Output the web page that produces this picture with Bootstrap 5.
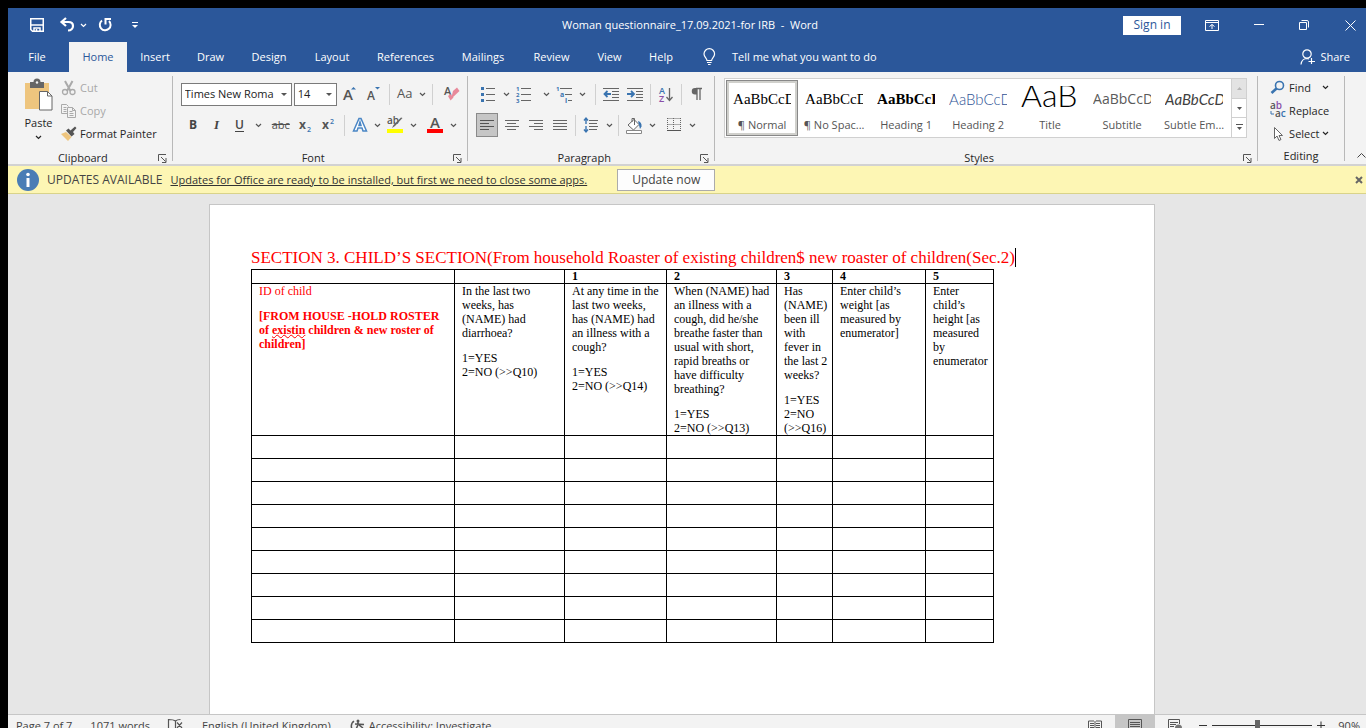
<!DOCTYPE html>
<html lang="en">
<head>
<meta charset="utf-8">
<meta name="viewport" content="width=device-width, initial-scale=1">
<title>Woman questionnaire_17.09.2021-for IRB - Word</title>
<link href="https://cdn.jsdelivr.net/npm/bootstrap@5.3.0/dist/css/bootstrap.min.css" rel="stylesheet">
<style>
:root{--blue:#2b579a;--face:#f3f3f3;--line:#c8c8c8;--ink:#262626;--icon:#666;--accent:#3a74b0}
body{background:#000;height:100vh;overflow:hidden;font:11px/16px "Open Sans","Noto Sans",sans-serif;color:var(--ink)}
button{border:0;background:none;padding:0;color:inherit}
svg{display:block;flex:none;overflow:visible}
.word-app{margin:8px 0 0 8px;height:100vh;background:#e6e6e6}
/* title bar and tabs */
.title-bar{height:34px;display:grid;grid-template-columns:1fr auto 1fr;background:var(--blue);color:#fff}
.doc-title{white-space:pre;padding-left:6px}
.quick{padding-left:20px;gap:10px}
.sign-in{background:#fff;color:var(--blue);width:58px;height:19px}
.sign-in,.update-btn,.notice-head{font-size:12px}
.win-tools{gap:35px;padding-right:10px}
.tab-bar{height:30px;background:var(--blue);color:#fff}
.tab-grid{display:grid;grid-template-columns:58px 61px 56px 55px 62px 64px 83px 72px 65px 51px 52px}
.tab-grid a{color:#fff;text-decoration:none;display:flex;align-items:center;justify-content:center}
.tab-grid a.on{background:var(--face);color:var(--blue);margin-left:3px}
/* ribbon */
.ribbon{background:var(--face);height:94px;padding:4px 0 3px;border-bottom:2px solid #d2d2d2}
.group{border-right:1px solid #b8b8b8;display:flex;flex-direction:column;justify-content:space-between}
.g-clip{width:165px}.g-font{width:296px}.g-para{width:247px}.g-edit{width:87px}
.g-label{display:grid;grid-template-columns:1fr 14px;text-align:center;height:11px;align-items:center}
.tool-rows{padding:6px 0 0 8px;display:flex;flex-direction:column;gap:7px}
.tool-row{display:flex;align-items:center;height:24px}
.tool{width:24px;height:24px;display:flex;align-items:center;justify-content:center;flex:none;color:#505050}
.tool.on{background:#c6c6c6;border:1px solid #8a8a8a;width:22px;margin-right:2px}
.drop{width:12px;height:24px;display:flex;align-items:center;justify-content:center;flex:none;color:#555}
.bar{width:7px;height:21px;flex:none;background:linear-gradient(#d0d0d0,#d0d0d0) center/1px 100% no-repeat}
.combo{appearance:none;height:23px;border:1px solid #7a7a7a;border-radius:0;padding:0 10px 0 3px;color:#222;background:#fff url("data:image/svg+xml,%3Csvg xmlns='http://www.w3.org/2000/svg' width='6' height='3'%3E%3Cpath d='M0 0h6L3 3z' fill='%23555'/%3E%3C/svg%3E") right 4px center no-repeat}
.combo.face{width:111px;margin-right:2px}.combo.pt{width:43px;margin-right:1px}
.small-cmd{display:flex;align-items:center;height:23px;gap:3px;white-space:nowrap}
.dim{color:#a8a8a8}
/* styles gallery */
.gallery{margin:2px 10px 0 9px;height:60px;background:#fff;border:1px solid #d0d0d0;display:flex}
.gallery-items{display:grid;grid-template-columns:repeat(7,72px);padding:1px;flex:1}
.style-item{height:56px;padding:6px 6px 0;overflow:hidden;display:flex;flex-direction:column;align-items:center;color:#555}
.style-item.on{outline:1px solid #888;outline-offset:-1px;box-shadow:inset 0 0 0 3px #d0d0cc}
.preview{width:58px;height:26px;line-height:26px;overflow:hidden;white-space:nowrap;text-align:left;color:#000}
.style-name{height:22px;line-height:26px;white-space:nowrap}
.serif{font-family:"Liberation Serif",serif;font-size:15px}
.light{font-family:Lato,sans-serif;font-weight:300;font-size:15px}
.light.h2-tone{color:#2f5496}
.light.big{font-size:32px;line-height:18px}
.sub{font-size:14px;color:#5a5a5a}
.emph{font-family:Lato,sans-serif;font-style:italic;font-size:15px;color:#404040}
.scroller{width:15px;display:flex;flex-direction:column;border-left:1px solid #d0d0d0}
.scroller button{flex:1;display:flex;align-items:center;justify-content:center;border-bottom:1px solid #d0d0d0}
.scroller button:first-child{background:#e3e3e3}
.scroller button:last-child{border:0}
/* message bar */
.notice{height:28px;background:#fdf6b4;border-bottom:1px solid #d9d38a;color:#444;padding:0 3px 0 9px}
.notice a{color:#333}
.update-btn{background:#fdfdfd;border:1px solid #ababab;width:98px;height:22px;margin-left:30px}
/* document */
.workspace{flex:1;min-height:0;padding:10px 10px 0 0;overflow:hidden}
.sheet{width:946px;background:#fff;border:1px solid #c6c6c6;border-bottom:0;padding:43px 41px 0;font-family:"Liberation Serif",serif;color:#000}
.sheet h1{font-size:17px;line-height:20px;color:#f00;margin:0 0 1px;font-weight:400;white-space:nowrap}
.caret{border-right:1px solid #000}
.form-grid{width:743px;table-layout:fixed;border-collapse:collapse;font-size:12px;line-height:14px}
.form-grid th,.form-grid td{border:1px solid #000;padding:0 4px 0 7px;vertical-align:top;text-align:left}
.form-grid th{line-height:13px;height:14px}
.form-grid p{margin:0 0 11px}
.form-grid p:last-child{margin:0}
.form-grid .blank td{height:23px}
.red{color:#f00}
.typo{text-decoration:underline wavy #f00 1px;text-underline-offset:0}
/* status bar */
.status{height:22px;background:var(--face);border-top:1px solid #c6c6c6;color:#444;padding:0 6px 0 8px;gap:18px}
.view-btn{width:40px;height:21px;display:flex;align-items:center;justify-content:center}
.view-btn.on{background:#c6c6c6}
.zoom-range{appearance:none;background:linear-gradient(#333,#333) center/100% 1px no-repeat;width:100px;height:14px;margin:0 5px}
.zoom-range::-webkit-slider-thumb{appearance:none;width:5px;height:12px;background:#666}
.zoom-value{margin-left:13px}
</style>
</head>
<body>
<svg width="0" height="0" class="position-absolute" aria-hidden="true">
<symbol id="chev" viewBox="0 0 7 5"><path d="M1 1l2.500 2.500L6 1" fill="none" stroke="currentColor" stroke-width="1.200"/></symbol>
<symbol id="launch" viewBox="0 0 9 9"><path d="M.5 7V.5H8M3 3l4.500 4.500M8 4v4.500H4" fill="none" stroke="#555"/></symbol>
</svg>
<div class="word-app d-flex flex-column">
<header>
<div class="title-bar align-items-center">
 <div class="quick d-flex align-items-center">
  <button aria-label="Save"><svg width="18" height="16"><path d="M2.750 1.750h12.500v12.500H4.500L2.750 12.500zM2.750 8h12.500M6 14v-3h6v3M8.500 14v-2" fill="none" stroke="#fff" stroke-width="1.500"/></svg></button>
  <button class="d-flex align-items-center gap-1 ms-1" aria-label="Undo"><svg width="16" height="16"><path d="M6 1L1.500 5 6 9M2 5h6.500c3 0 4.500 1.500 4.500 4s-2 4.500-5 4.500" fill="none" stroke="#fff" stroke-width="2.200"/></svg><svg width="7" height="5"><use href="#chev"/></svg></button>
  <button aria-label="Redo"><svg width="16" height="16"><path d="M5 3.500a5.400 5.400 0 1 0 7 .5M14 2H8.500v5.500" fill="none" stroke="#fff" stroke-width="2"/></svg></button>
  <button class="ms-2" aria-label="Customize"><svg width="8" height="8"><path d="M1 1.500h6" stroke="#fff"/><path d="M1 4h6L4 7z" fill="#fff"/></svg></button>
 </div>
 <div class="doc-title">Woman questionnaire_17.09.2021-for IRB  -  Word</div>
 <div class="d-flex justify-content-end align-items-center">
  <button class="sign-in me-4">Sign in</button>
  <div class="win-tools d-flex align-items-center">
   <button aria-label="Ribbon options"><svg width="14" height="11"><path d="M.5.500h13v10H.5zM.5 2.500h13M7 9V4.500M4.500 6.500L7 4.500l2.500 2" fill="none" stroke="#fff"/></svg></button>
   <button aria-label="Minimize"><svg width="10" height="11"><path d="M0 4.500h10" stroke="#fff"/></svg></button>
   <button aria-label="Restore"><svg width="11" height="11"><path d="M.5 2.500h7v7h-7zM2.500.500H8q1.500 0 1.500 1.500v5.500" fill="none" stroke="#fff"/></svg></button>
   <button aria-label="Close"><svg width="11" height="11"><path d="M.5.500l10 10M10.500.500l-10 10" stroke="#fff"/></svg></button>
  </div>
 </div>
</div>
<div class="tab-bar d-flex">
 <nav class="tab-grid">
  <a href="#">File</a><a href="#" class="on">Home</a><a href="#">Insert</a><a href="#">Draw</a><a href="#">Design</a><a href="#">Layout</a><a href="#">References</a><a href="#">Mailings</a><a href="#">Review</a><a href="#">View</a><a href="#">Help</a>
 </nav>
 <button class="d-flex align-items-center ms-3"><svg width="13" height="18" class="me-3"><path d="M4 12.500c0-2-3-3.500-3-6.500a5.300 5.300 0 0 1 10.600 0c0 3-3 4.500-3 6.500zM4 14.500h4.600M5 16.500h2.600" fill="none" stroke="#fff" stroke-width="1.200"/></svg>Tell me what you want to do</button>
 <button class="d-flex align-items-center ms-auto me-3 gap-1"><svg width="16" height="16"><circle cx="7" cy="5" r="4.200" fill="none" stroke="#fff" stroke-width="1.200"/><path d="M1 15.500c.5-4 2.500-6 6-6l2 .5M11.500 9v6M8.500 12.500h6.500" fill="none" stroke="#fff" stroke-width="1.200"/></svg>Share</button>
</div>
</header>

<div class="ribbon d-flex" role="toolbar" aria-label="Home">
 <section class="group g-clip">
  <div class="d-flex">
   <button class="d-flex flex-column align-items-center ms-3 me-2 pt-1">
    <svg width="29" height="31"><path d="M1 3h24v26H1z" fill="#eec57e"/><path d="M6 2h3.500a3 3 0 0 1 7 0H20v6H6z" fill="#666"/><circle cx="13" cy="2.500" r="1.200" fill="#f3f3f3"/><path d="M15.500 11.500h8l4.500 4.500v14H15.500z" fill="#fff" stroke="#666"/><path d="M23.500 11.500V16H28" fill="none" stroke="#666"/></svg>
    <span class="pt-1">Paste</span><svg width="7" height="5" class="mt-1"><use href="#chev"/></svg></button>
   <div>
    <button class="small-cmd dim" disabled><svg width="16" height="16"><path d="M4 1l5.500 10M11.500 1L6 11" stroke="#aaa" stroke-width="2"/><circle cx="4" cy="12" r="2.500" fill="none" stroke="#aaa" stroke-width="1.300"/><circle cx="11.500" cy="12" r="2.500" fill="none" stroke="#aaa" stroke-width="1.300"/></svg>Cut</button>
    <button class="small-cmd dim" disabled><svg width="16" height="16"><path d="M6 10.500H.5V1.500h5l2 2M2.500 4.500h3M2.500 6.500h3M2.500 8.500h3M6.500 4.500h5l3 3v7h-8zM11.500 4.500v3h3M8.500 8.500h3M8.500 10.500h4M8.500 12.500h4" fill="none" stroke="#aaa"/></svg>Copy</button>
    <button class="small-cmd"><svg width="16" height="16"><path d="M0 8l5-2 5.500 5L7 15z" fill="#eec57e"/><path d="M5 4.500l2.500-2 2 2L14 .500 15.500 2l-3.500 4 1.500 2-3 2.500z" fill="#555"/></svg>Format Painter</button>
   </div>
  </div>
  <div class="g-label"><span>Clipboard</span><button aria-label="Clipboard settings"><svg width="9" height="9"><use href="#launch"/></svg></button></div>
 </section>

 <section class="group g-font">
  <div class="tool-rows">
   <div class="tool-row">
    <select class="combo face" aria-label="Font"><option>Times New Roma</option></select>
    <select class="combo pt" aria-label="Font size"><option>14</option></select>
    <button class="tool" aria-label="Grow font"><svg width="14" height="16"><text x="0" y="14" font-size="15" font-weight="600" fill="#555">A</text><path d="M8 3.500h5L10.500 1z" fill="#3a74b0"/></svg></button>
    <button class="tool" aria-label="Shrink font"><svg width="14" height="16"><text x="0" y="14" font-size="12" font-weight="600" fill="#555">A</text><path d="M8 1h5l-2.500 2.500z" fill="#3a74b0"/></svg></button>
    <span class="bar"></span>
    <button class="tool" aria-label="Change case"><svg width="16" height="16"><text x="0" y="12" font-size="13" fill="#555">Aa</text></svg></button>
    <button class="drop" aria-label="Case options"><svg width="7" height="5"><use href="#chev"/></svg></button>
    <span class="bar"></span>
    <button class="tool ms-1" aria-label="Clear formatting"><svg width="16" height="16"><text x="0" y="9" font-size="11" font-weight="600" fill="#555">A</text><path d="M9 5l4-3.500L15.500 5 7 13z" fill="#e8899a"/><path d="M4 10l2.500-2 3 3.500L6.500 14.500z" fill="#e8899a"/></svg></button>
   </div>
   <div class="tool-row">
    <button class="tool" aria-label="Bold"><svg width="24" height="16"><text x="8" y="12" font-size="12" font-weight="700" fill="#444">B</text></svg></button>
    <button class="tool" aria-label="Italic"><svg width="24" height="16"><text x="9" y="12" font-size="13" font-style="italic" font-weight="700" fill="#444" font-family="Liberation Serif">I</text></svg></button>
    <button class="tool" aria-label="Underline"><svg width="24" height="16"><text x="6" y="12" font-size="12" font-weight="600" fill="#444">U</text><path d="M6 14.500h9" stroke="#444"/></svg></button>
    <button class="drop" aria-label="Underline styles"><svg width="7" height="5"><use href="#chev"/></svg></button>
    <button class="tool text-decoration-line-through ms-1">abc</button>
    <button class="tool" aria-label="Subscript"><svg width="16" height="16"><text x="2" y="12" font-size="12" font-weight="700" fill="#555">x</text><text x="10" y="15" font-size="7" font-weight="600" fill="#3a74b0">2</text></svg></button>
    <button class="tool" aria-label="Superscript"><svg width="16" height="16"><text x="1" y="12" font-size="12" font-weight="700" fill="#555">x</text><text x="9" y="7" font-size="7" font-weight="600" fill="#3a74b0">2</text></svg></button>
    <span class="bar"></span>
    <button class="tool" aria-label="Text effects"><svg width="16" height="16"><path d="M1.500 14L7 1.500h2L14.500 14H11l-1-3H6l-1 3zM7 8.500h2L8 5z" fill="#fff" stroke="#4a86c5" stroke-width="1.500"/></svg></button>
    <button class="drop" aria-label="Effects options"><svg width="7" height="5"><use href="#chev"/></svg></button>
    <button class="tool" aria-label="Highlight"><svg width="17" height="18"><text x="0" y="8" font-size="10" font-weight="600" fill="#555">ab</text><path d="M15.500 2L8 10l-3 2 1.500-3L14 1.500z" fill="#666"/><path d="M0 13h16v4H0z" fill="#ff0"/></svg></button>
    <button class="drop" aria-label="Highlight colour"><svg width="7" height="5"><use href="#chev"/></svg></button>
    <button class="tool ms-1" aria-label="Font colour"><svg width="17" height="18"><text x="3" y="12" font-size="15" font-weight="600" fill="#555">A</text><path d="M0 13h16v4H0z" fill="#f00"/></svg></button>
    <button class="drop" aria-label="Font colour options"><svg width="7" height="5"><use href="#chev"/></svg></button>
   </div>
  </div>
  <div class="g-label"><span>Font</span><button aria-label="Font settings"><svg width="9" height="9"><use href="#launch"/></svg></button></div>
 </section>

 <section class="group g-para">
  <div class="tool-rows">
   <div class="tool-row">
    <button class="tool" aria-label="Bullets"><svg width="15" height="16"><path d="M5 2.500h9M5 8.500h9M5 14.500h9" stroke="#666"/><path d="M0 1h3v3H0zM0 7h3v3H0zM0 13h3v3H0z" fill="#3a74b0"/></svg></button>
    <button class="drop" aria-label="Bullet options"><svg width="7" height="5"><use href="#chev"/></svg></button>
    <button class="tool" aria-label="Numbering"><svg width="16" height="17"><path d="M5 2.500h10M5 8.500h10M5 14.500h10" stroke="#666"/><text y="5" font-size="6" font-weight="700" fill="#3a74b0">1</text><text y="11" font-size="6" font-weight="700" fill="#3a74b0">2</text><text y="17" font-size="6" font-weight="700" fill="#3a74b0">3</text></svg></button>
    <button class="drop ms-1" aria-label="Numbering options"><svg width="7" height="5"><use href="#chev"/></svg></button>
    <button class="tool" aria-label="Multilevel list"><svg width="17" height="17"><path d="M4 2.500h12M9 8.500h7M12 14.500h4" stroke="#666"/><text y="5" font-size="6" font-weight="700" fill="#3a74b0">1</text><text x="4" y="11" font-size="7" font-weight="700" fill="#3a74b0">a</text><text x="9" y="17" font-size="7" font-weight="700" fill="#3a74b0">i</text></svg></button>
    <button class="drop" aria-label="List options"><svg width="7" height="5"><use href="#chev"/></svg></button>
    <span class="bar ms-1"></span>
    <button class="tool" aria-label="Decrease indent"><svg width="17" height="14"><path d="M0 1.500h16M9 4.500h7M9 7.500h7M9 10.500h7M0 13.500h16" stroke="#666"/><path d="M8 7H2M4.500 4L1.500 7l3 3" fill="none" stroke="#3a74b0" stroke-width="1.800"/></svg></button>
    <button class="tool" aria-label="Increase indent"><svg width="17" height="14"><path d="M0 1.500h16M9 4.500h7M9 7.500h7M9 10.500h7M0 13.500h16" stroke="#666"/><path d="M0 7h6M4 4l3 3-3 3" fill="none" stroke="#3a74b0" stroke-width="1.800"/></svg></button>
    <span class="bar"></span>
    <button class="tool" aria-label="Sort"><svg width="15" height="17"><text y="8" font-size="9" font-weight="600" fill="#3a74b0">A</text><text y="16" font-size="9" font-weight="600" fill="#8a4fa8">Z</text><path d="M10.500 2v12M7.500 11l3 3.500 3-3.500" fill="none" stroke="#666" stroke-width="1.300"/></svg></button>
    <span class="bar"></span>
    <button class="tool" aria-label="Show marks"><svg width="12" height="14"><path d="M5 1.500h6M6 1.500V13M9 1.500V13" stroke="#666" stroke-width="1.300"/><path d="M6 1H4a3.200 3.200 0 0 0 0 6.500h2z" fill="#666"/></svg></button>
   </div>
   <div class="tool-row">
    <button class="tool on" aria-label="Align left"><svg width="16" height="13"><path d="M1 1.500h14M1 4.500h9M1 7.500h14M1 10.500h9" stroke="#555"/></svg></button>
    <button class="tool" aria-label="Centre"><svg width="16" height="13"><path d="M1 1.500h14M3 4.500h9M1 7.500h14M3 10.500h9" stroke="#666"/></svg></button>
    <button class="tool" aria-label="Align right"><svg width="16" height="13"><path d="M1 1.500h14M6 4.500h9M1 7.500h14M6 10.500h9" stroke="#666"/></svg></button>
    <button class="tool" aria-label="Justify"><svg width="16" height="13"><path d="M1 1.500h14M1 4.500h14M1 7.500h14M1 10.500h14" stroke="#666"/></svg></button>
    <span class="bar"></span>
    <button class="tool" aria-label="Line spacing"><svg width="16" height="16"><path d="M6 3.500h9M6 6.500h8M6 9.500h9M6 12.500h8" stroke="#666"/><path d="M3 1v6M1 3.500l2-2.500 2 2.500M3 9v6M1 12.500L3 15l2-2.500" fill="none" stroke="#3a74b0" stroke-width="1.400"/></svg></button>
    <button class="drop" aria-label="Spacing options"><svg width="7" height="5"><use href="#chev"/></svg></button>
    <span class="bar"></span>
    <button class="tool" aria-label="Shading"><svg width="17" height="17"><path d="M2 8l6-5.500 5 5-5.500 5.500zM6 5V1.500h2.500V8" fill="#fff" stroke="#666"/><path d="M12 4q4 1 3.500 5.500L14 12z" fill="#3a74b0"/><path d="M.5 13.500h15v3H.5z" fill="#fff" stroke="#888"/></svg></button>
    <button class="drop" aria-label="Shading options"><svg width="7" height="5"><use href="#chev"/></svg></button>
    <button class="tool ms-1" aria-label="Borders"><svg width="14" height="14"><path d="M.5.500h13M.5 6.500h13M.5 0v12M6.500 0v12M13.500 0v12" stroke="#666" stroke-dasharray="1 1"/><path d="M0 12.500h14" stroke="#555"/></svg></button>
    <button class="drop" aria-label="Border options"><svg width="7" height="5"><use href="#chev"/></svg></button>
   </div>
  </div>
  <div class="g-label"><span>Paragraph</span><button aria-label="Paragraph settings"><svg width="9" height="9"><use href="#launch"/></svg></button></div>
 </section>

 <section class="group flex-grow-1">
  <div class="gallery">
   <div class="gallery-items">
    <button class="style-item on"><span class="preview serif">AaBbCcDd</span><span class="style-name">¶ Normal</span></button>
    <button class="style-item"><span class="preview serif">AaBbCcDd</span><span class="style-name">¶ No Spac...</span></button>
    <button class="style-item"><span class="preview serif fw-bold">AaBbCcDd</span><span class="style-name">Heading 1</span></button>
    <button class="style-item"><span class="preview light h2-tone">AaBbCcDd</span><span class="style-name">Heading 2</span></button>
    <button class="style-item"><span class="preview light big">AaB</span><span class="style-name">Title</span></button>
    <button class="style-item"><span class="preview sub">AaBbCcDd</span><span class="style-name">Subtitle</span></button>
    <button class="style-item"><span class="preview emph">AaBbCcDd</span><span class="style-name">Subtle Em...</span></button>
   </div>
   <div class="scroller">
    <button aria-label="Up"><svg width="5" height="3"><path d="M0 3h5L2.500 0z" fill="#b5b5b5"/></svg></button>
    <button aria-label="Down"><svg width="5" height="3"><path d="M0 0h5L2.500 3z" fill="#555"/></svg></button>
    <button aria-label="More styles"><svg width="7" height="7"><path d="M0 .500h7" stroke="#555"/><path d="M1 3h5L3.500 6z" fill="#555"/></svg></button>
   </div>
  </div>
  <div class="g-label"><span>Styles</span><button aria-label="Styles settings"><svg width="9" height="9"><use href="#launch"/></svg></button></div>
 </section>

 <section class="group g-edit">
  <div class="ps-2 ms-1">
   <button class="small-cmd"><svg width="16" height="16"><circle cx="9.500" cy="5.500" r="4" fill="none" stroke="#3a74b0" stroke-width="1.600"/><path d="M6.500 8.500L1.500 13" stroke="#3a74b0" stroke-width="2.600"/></svg>Find<svg width="7" height="5" class="ms-2"><use href="#chev"/></svg></button>
   <button class="small-cmd"><svg width="16" height="17"><text x="0" y="7" font-size="10" font-weight="600" fill="#555">a<tspan fill="#8a4fa8">b</tspan></text><text x="5" y="15" font-size="10" font-weight="600" fill="#555">a<tspan fill="#3a74b0">c</tspan></text><path d="M1 9v3h3" fill="none" stroke="#3a74b0"/></svg>Replace</button>
   <button class="small-cmd"><svg width="16" height="16"><path d="M4.500 1.500v11l2.500-2.500 2 4.500 2-1-2-4h3.500z" fill="#fff" stroke="#666"/></svg>Select<svg width="7" height="5"><use href="#chev"/></svg></button>
  </div>
  <div class="g-label d-block"><span class="d-block lh-1">Editing</span></div>
 </section>
 <button class="align-self-end ps-2 ms-1" aria-label="Collapse ribbon"><svg width="9" height="9"><path d="M.5 5.500l4-4 4 4" fill="none" stroke="#444"/></svg></button>
</div>

<div class="notice d-flex align-items-center">
 <svg width="22" height="22" class="me-2"><circle cx="11" cy="11" r="11" fill="#4a7db5"/><path d="M9.500 9h3v9h-3z" fill="#fff"/><circle cx="11" cy="5.500" r="1.800" fill="#fff"/></svg>
 <span class="notice-head">UPDATES AVAILABLE</span>
 <a href="#" class="ms-2">Updates for Office are ready to be installed, but first we need to close some apps.</a>
 <button class="update-btn">Update now</button>
 <button class="ms-auto" aria-label="Dismiss"><svg width="8" height="8"><path d="M1 1l6 6M7 1L1 7" stroke="#666" stroke-width="2"/></svg></button>
</div>

<main class="workspace d-flex justify-content-center">
 <article class="sheet">
  <h1><span class="caret">SECTION 3. CHILD’S SECTION(From household Roaster of existing children$ new roaster of children(Sec.2)</span></h1>
  <table class="form-grid">
   <colgroup><col style="width:203px"><col style="width:110px"><col style="width:102px"><col style="width:110px"><col style="width:56px"><col style="width:93px"><col style="width:68px"></colgroup>
   <thead><tr><th></th><th></th><th>1</th><th>2</th><th>3</th><th>4</th><th>5</th></tr></thead>
   <tbody>
    <tr>
     <td class="red"><p>ID of child</p><p class="fw-bold">[FROM HOUSE -HOLD ROSTER of <span class="typo">existin</span> children &amp; new roster of children]</p></td>
     <td><p>In the last two weeks, has (NAME) had diarrhoea?</p><p>1=YES<br>2=NO (&gt;&gt;Q10)</p></td>
     <td><p>At any time in the last two weeks, has (NAME) had an illness with a cough?</p><p>1=YES<br>2=NO (&gt;&gt;Q14)</p></td>
     <td><p>When (NAME) had an illness with a cough, did he/she breathe faster than usual with short, rapid breaths or have difficulty breathing?</p><p>1=YES<br>2=NO (&gt;&gt;Q13)</p></td>
     <td><p>Has (NAME) been ill with fever in the last 2 weeks?</p><p>1=YES<br>2=NO (&gt;&gt;Q16)</p></td>
     <td><p>Enter child’s weight [as measured by enumerator]</p></td>
     <td><p>Enter child’s height [as measured by enumerator</p></td>
    </tr>
    <tr class="blank"><td></td><td></td><td></td><td></td><td></td><td></td><td></td></tr>
    <tr class="blank"><td></td><td></td><td></td><td></td><td></td><td></td><td></td></tr>
    <tr class="blank"><td></td><td></td><td></td><td></td><td></td><td></td><td></td></tr>
    <tr class="blank"><td></td><td></td><td></td><td></td><td></td><td></td><td></td></tr>
    <tr class="blank"><td></td><td></td><td></td><td></td><td></td><td></td><td></td></tr>
    <tr class="blank"><td></td><td></td><td></td><td></td><td></td><td></td><td></td></tr>
    <tr class="blank"><td></td><td></td><td></td><td></td><td></td><td></td><td></td></tr>
    <tr class="blank"><td></td><td></td><td></td><td></td><td></td><td></td><td></td></tr>
    <tr class="blank"><td></td><td></td><td></td><td></td><td></td><td></td><td></td></tr>
   </tbody>
  </table>
 </article>
</main>

<footer class="status d-flex align-items-center">
 <span>Page 7 of 7</span><span>1071 words</span>
 <svg width="16" height="16"><path d="M7.500 14V3q-2-1.500-7-1.500v11h5M7.500 3q1.500-1.500 5-1.500M9 4.500l5 5.500M14 4.500L9 10" fill="none" stroke="#555" stroke-width="1.200"/></svg>
 <span>English (United Kingdom)</span>
 <button class="d-flex align-items-center gap-1"><svg width="16" height="16"><path d="M5 3A6 6 0 0 0 5 13M6 6l9 .500M9 2v4.500l-2 5M10 7l4 3" fill="none" stroke="#555" stroke-width="1.500"/><circle cx="9" cy="3" r="1.500" fill="#555"/></svg>Accessibility: Investigate</button>
 <div class="ms-auto d-flex align-items-center">
  <button class="view-btn" aria-label="Read mode"><svg width="14" height="12"><path d="M.5 1v10.500h13V1M7 1v11M.5 1H6M8 1h5.500M2 3.500h4M2 5.500h4M2 7.500h4M2 9.500h4M8 3.500h4M8 5.500h4M8 7.500h4M8 9.500h4" fill="none" stroke="#555"/></svg></button>
  <button class="view-btn on" aria-label="Print layout"><svg width="14" height="13"><path d="M.5.500h13v12H.5zM2 3.500h10M2 5.500h10M2 7.500h10M2 9.500h10" fill="none" stroke="#555"/></svg></button>
  <button class="view-btn" aria-label="Web layout"><svg width="15" height="13"><path d="M6 12.500H.5V.500h11V5M2 3.500h8M2 5.500h6M2 7.500h4M2 9.500h4" fill="none" stroke="#555"/><circle cx="10.500" cy="9" r="3.500" fill="#777"/></svg></button>
  <button aria-label="Zoom out" class="ms-1"><svg width="8" height="9"><path d="M0 4.500h8" stroke="#333"/></svg></button>
  <input type="range" class="zoom-range" aria-label="Zoom" min="0" max="100" value="45">
  <button aria-label="Zoom in"><svg width="8" height="9"><path d="M0 4.500h8M4 .500v8" stroke="#333"/></svg></button>
  <span class="zoom-value">90%</span>
 </div>
</footer>
</div>
<script src="https://cdn.jsdelivr.net/npm/bootstrap@5.3.0/dist/js/bootstrap.bundle.min.js"></script>
</body>
</html>
